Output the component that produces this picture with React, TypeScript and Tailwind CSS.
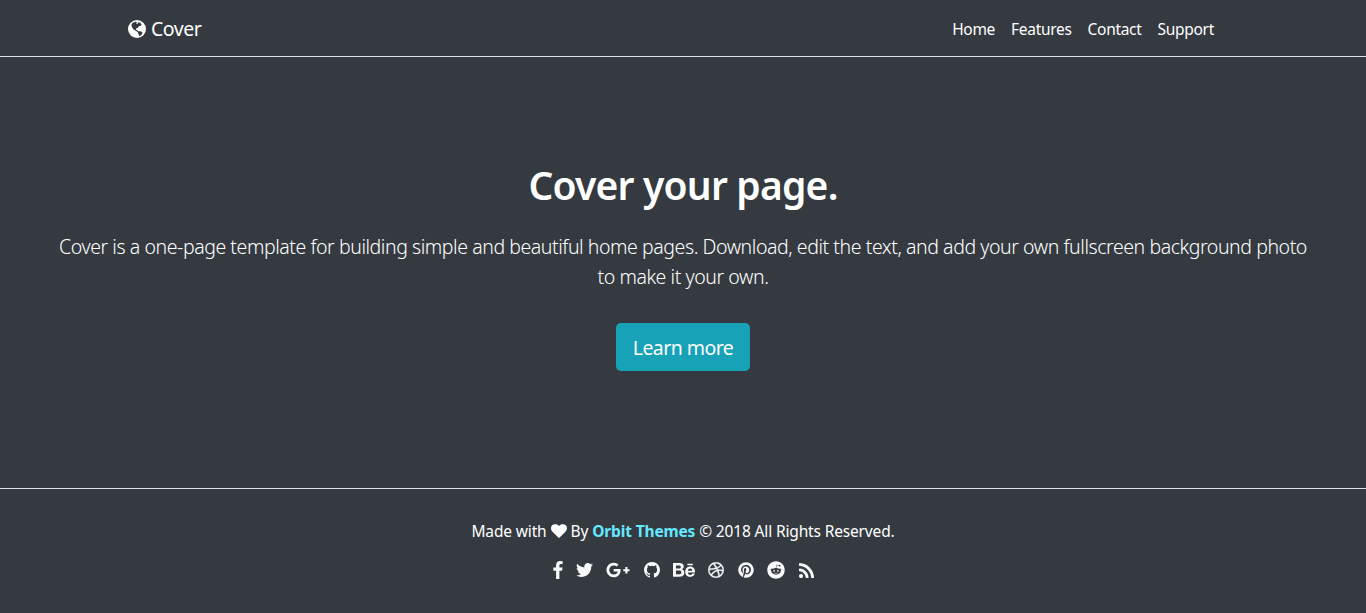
import React from "react";
import { FaGooglePlusG, FaBehance, FaDribbble, FaPinterest, FaReddit } from "react-icons/fa";

const FACEBOOK = "M1343 12v264h-157q-86 0-116 36t-30 108v189h293l-39 296h-254v759h-306v-759h-255v-296h255v-218q0-186 104-288.5t277-102.5q147 0 228 12z";
const TWITTER = "M1684 408q-67 98-162 167 1 14 1 42 0 130-38 259.5t-115.5 248.5-184.5 210.5-258 146-323 54.5q-271 0-496-145 35 4 78 4 225 0 401-138-105-2-188-64.5t-114-159.5q33 5 61 5 43 0 85-11-112-23-185.5-111.5t-73.5-205.5v-4q68 38 146 41-66-44-105-115t-39-154q0-88 44-163 121 149 294.5 238.5t371.5 99.5q-8-38-8-74 0-134 94.5-228.5t228.5-94.5q140 0 236 102 109-21 205-78-37 115-142 178 93-10 186-50z";
const GITHUB = "M896 128q209 0 385.5 103t279.5 279.5 103 385.5q0 251-146.5 451.5t-378.5 277.5q-27 5-40-7t-13-30q0-3 .5-76.5t.5-134.5q0-97-52-142 57-6 102.5-18t94-39 81-66.5 53-105 20.5-150.5q0-119-79-206 37-91-8-204-28-9-81 11t-92 44l-38 24q-93-26-192-26t-192 26q-16-11-42.5-27t-83.5-38.5-85-13.5q-45 113-8 204-79 87-79 206 0 85 20.5 150t52.5 105 80.5 67 94 39 102.5 18q-39 36-49 103-21 10-45 15t-57 5-65.5-21.5-55.5-62.5q-19-32-48.5-52t-49.5-24l-20-3q-21 0-29 4.5t-5 11.5 9 14 13 12l7 5q22 10 43.5 38t31.5 51l10 23q13 38 44 61.5t67 30 69.5 7 55.5-3.5l23-4q0 38 .5 88.5t.5 54.5q0 18-13 30t-40 7q-232-77-378.5-277.5t-146.5-451.5q0-209 103-385.5t279.5-279.5 385.5-103z";
const RSS = "M576 1344q0 80-56 136t-136 56-136-56-56-136 56-136 136-56 136 56 56 136zm512 123q2 28-17 48-18 21-47 21h-135q-25 0-43-16.5t-20-41.5q-22-229-184.5-391.5t-391.5-184.5q-25-2-41.5-20t-16.5-43v-135q0-29 21-47 17-17 43-17h5q160 13 306 80.5t259 181.5q114 113 181.5 259t80.5 306zm512 2q2 27-18 47-18 20-46 20h-143q-26 0-44.5-17.5t-19.5-42.5q-12-215-101-408.5t-231.5-336-336-231.5-408.5-102q-25-1-42.5-19.5t-17.5-43.5v-143q0-28 20-46 18-18 44-18h3q262 13 501.5 120t425.5 294q187 186 294 425.5t120 501.5z";
const HEART = "M896 1664q-26 0-44-18l-624-602q-10-8-27.5-26t-55.5-65.5-68-97.5-53.5-121-23.5-138q0-220 127-344t351-124q62 0 126.5 21.5t120 58 95.5 68.5 76 68q36-36 76-68t95.5-68.5 120-58 126.5-21.5q224 0 351 124t127 344q0 221-229 450l-623 600q-18 18-44 18z";

function Glyph({ d, viewBox, className }: { d: string; viewBox: string; className: string }) {
  return (
    <svg viewBox={viewBox} className={className} fill="currentColor" aria-hidden="true">
      <path d={d} />
    </svg>
  );
}

function Globe({ className }: { className: string }) {
  return (
    <svg viewBox="0 0 54 54" className={className} aria-hidden="true">
      <circle cx="27" cy="27" r="27" fill="#fff" />
      <path fill="#343a40" d="M13 9L22 5L27 7L24 11L29 11L31 7L37 8L41 14L37 18L33 19L29 24L25 25L24 29L28 31L32 35L29 36L23 32L16 28L12 22L10 15Z M32 34L38 34L44 38L40 45L34 49L32 43L29 39Z" />
    </svg>
  );
}

export default function App() {
  return (
    <div className="flex h-[613px] flex-col bg-[#343a40] font-['Noto_Sans',sans-serif] text-[15.5px] text-white">
      <header className="flex h-[57px] shrink-0 items-center justify-between border-b border-[#dee2e6] pt-px pr-[152px] pl-[128px]">
        <a href="#" className="flex items-center gap-[5px] text-[19.5px] leading-[30px] tracking-[-0.45px]">
          <Globe className="size-[18px]" />
          <span className="pt-px">Cover</span>
        </a>
        <nav className="flex gap-4 leading-6 tracking-[-0.3px]">
          <a href="#">Home</a>
          <a href="#">Features</a>
          <a href="#">Contact</a>
          <a href="#">Support</a>
        </nav>
      </header>
      <main className="flex h-[431px] shrink-0 flex-col items-center pt-[104px] text-center">
        <h1 className="text-[39px] leading-[48px] font-semibold tracking-[-0.8px]">Cover your page.</h1>
        <p className="mt-[23px] text-[19.5px] leading-[30px] font-light tracking-[-0.435px]">
          <span className="block whitespace-nowrap">Cover is a one-page template for building simple and beautiful home pages. Download, edit the text, and add your own fullscreen background photo</span>
          <span className="block">to make it your own.</span>
        </p>
        <a href="#" className="mt-[31px] flex h-12 w-[134px] items-center justify-center rounded-[5px] bg-[#17a2b8] pt-px text-[19.5px] leading-[30px] tracking-[-0.55px] whitespace-nowrap">Learn more</a>
      </main>
      <footer className="flex flex-1 flex-col items-center border-t border-[#dee2e6] pt-[30px]">
        <p className="flex items-center gap-1 leading-6 tracking-[-0.15px] whitespace-nowrap">
          <span>Made with</span>
          <Glyph d={HEART} viewBox="0 128 1792 1536" className="h-[14px] w-4" />
          <span>By</span>
          <a href="#" className="font-bold text-[#66e8ff]">Orbit Themes</a>
          <span>© 2018 All Rights Reserved.</span>
        </p>
        <div className="mt-[17px] flex h-5 w-[261px] items-center justify-between text-[#f8f9fa]">
          <Glyph d={FACEBOOK} viewBox="479 0 864 1664" className="h-[18px] w-[10px]" />
          <Glyph d={TWITTER} viewBox="108 256 1576 1280" className="h-[14px] w-[17px]" />
          <FaGooglePlusG className="h-6 w-6" />
          <Glyph d={GITHUB} viewBox="128 128 1536 1536" className="size-4" />
          <FaBehance className="size-[22px]" />
          <FaDribbble className="size-4 stroke-current stroke-[14px]" />
          <FaPinterest className="size-4" />
          <FaReddit className="size-[18px]" />
          <Glyph d={RSS} viewBox="192 128 1408 1408" className="size-[15px]" />
        </div>
      </footer>
    </div>
  );
}
